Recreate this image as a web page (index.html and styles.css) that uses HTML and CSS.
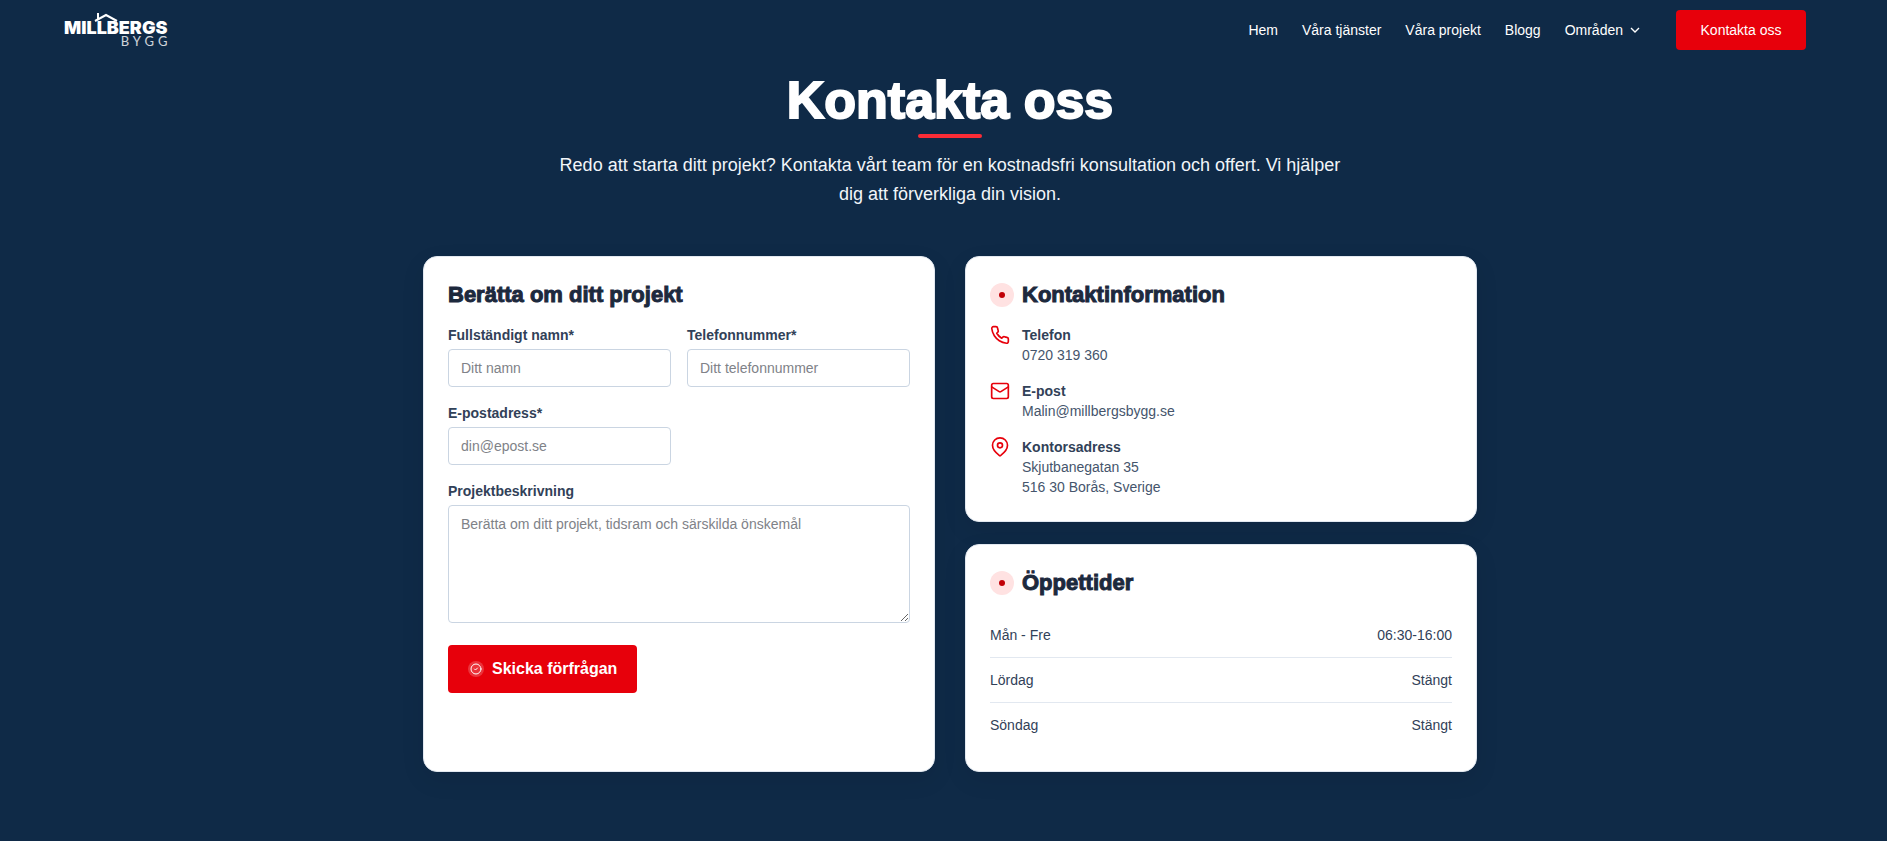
FILE: index.html
```html
<!DOCTYPE html>
<html lang="sv">
<head>
  <meta charset="UTF-8">
  <meta name="viewport" content="width=device-width, initial-scale=1">
  <title>Kontakta oss - Millbergs Bygg</title>
  <link rel="stylesheet" href="styles.css">
</head>
<body>
<header class="header">
  <a class="logo" href="#">
    <svg class="logo-roof" viewBox="0 0 24 10" width="24" height="10" fill="none" stroke="#fff" stroke-width="2">
      <path d="M1 8 L12 2 L23 8"/>
      <path d="M4 6 V0"/>
    </svg>
    <span class="logo-name">MILLBERGS</span>
    <span class="logo-sub">BYGG</span>
  </a>
  <nav class="nav">
    <a href="#">Hem</a>
    <a href="#">Våra tjänster</a>
    <a href="#">Våra projekt</a>
    <a href="#">Blogg</a>
    <a href="#" class="nav-drop">Områden
      <svg viewBox="0 0 24 24" width="16" height="16" fill="none" stroke="currentColor" stroke-width="2">
        <path d="m6 9 6 6 6-6"/>
      </svg>
    </a>
    <a href="#" class="nav-button">Kontakta oss</a>
  </nav>
</header>

<main class="main">
  <section class="intro">
    <h1>Kontakta oss</h1>
    <div class="line"></div>
    <p>Redo att starta ditt projekt? Kontakta vårt team för en kostnadsfri konsultation och offert. Vi hjälper dig att förverkliga din vision.</p>
  </section>

  <div class="columns">
    <section class="card">
      <h2>Berätta om ditt projekt</h2>
      <form class="form">
        <div class="field">
          <label for="name">Fullständigt namn*</label>
          <input type="text" id="name" placeholder="Ditt namn">
        </div>
        <div class="field">
          <label for="phone">Telefonnummer*</label>
          <input type="tel" id="phone" placeholder="Ditt telefonnummer">
        </div>
        <div class="field">
          <label for="email">E-postadress*</label>
          <input type="email" id="email" placeholder="din@epost.se">
        </div>
        <div class="field field-wide">
          <label for="message">Projektbeskrivning</label>
          <textarea id="message" placeholder="Berätta om ditt projekt, tidsram och särskilda önskemål"></textarea>
        </div>
        <button type="submit" class="submit">
          <span class="submit-icon">
            <svg viewBox="0 0 24 24" width="12" height="12" fill="none" stroke="currentColor" stroke-width="2" stroke-linecap="round" stroke-linejoin="round">
              <circle cx="12" cy="12" r="10"/>
              <path d="m9 12 2 2 4-4"/>
            </svg>
          </span>
          Skicka förfrågan
        </button>
      </form>
    </section>

    <div class="side">
      <section class="card">
        <h2><span class="dot"></span>Kontaktinformation</h2>
        <ul class="contacts">
          <li>
            <svg viewBox="0 0 24 24" width="20" height="20">
              <path d="M22 16.92v3a2 2 0 0 1-2.18 2 19.79 19.79 0 0 1-8.63-3.07 19.5 19.5 0 0 1-6-6 19.79 19.79 0 0 1-3.07-8.67A2 2 0 0 1 4.11 2h3a2 2 0 0 1 2 1.72 12.84 12.84 0 0 0 .7 2.81 2 2 0 0 1-.45 2.11L8.09 9.91a16 16 0 0 0 6 6l1.27-1.27a2 2 0 0 1 2.11-.45 12.84 12.84 0 0 0 2.81.7A2 2 0 0 1 22 16.92z"/>
            </svg>
            <div>
              <h3>Telefon</h3>
              <a href="tel:0720319360">0720 319 360</a>
            </div>
          </li>
          <li>
            <svg viewBox="0 0 24 24" width="20" height="20">
              <rect x="2" y="3" width="20" height="18" rx="2"/>
              <path d="m22 7-8.970 5.700a1.940 1.940 0 0 1-2.060 0L2 7"/>
            </svg>
            <div>
              <h3>E-post</h3>
              <a href="mailto:Malin@millbergsbygg.se">Malin@millbergsbygg.se</a>
            </div>
          </li>
          <li>
            <svg viewBox="0 0 24 24" width="20" height="20">
              <path d="M21 10c0 5-5.500 10.200-8.400 12.300a1 1 0 0 1-1.200 0C8.500 20.200 3 15 3 10a9 9 0 0 1 18 0"/>
              <circle cx="12" cy="10" r="3"/>
            </svg>
            <div>
              <h3>Kontorsadress</h3>
              <p>Skjutbanegatan 35<br>516 30 Borås, Sverige</p>
            </div>
          </li>
        </ul>
      </section>

      <section class="card">
        <h2><span class="dot"></span>Öppettider</h2>
        <table class="hours">
          <tr><th scope="row">Mån - Fre</th><td>06:30-16:00</td></tr>
          <tr><th scope="row">Lördag</th><td>Stängt</td></tr>
          <tr><th scope="row">Söndag</th><td>Stängt</td></tr>
        </table>
      </section>
    </div>
  </div>
</main>
</body>
</html>
```
FILE: styles.css
```css
* {
  box-sizing: border-box;
}

body {
  margin: 0;
  background: #0f2a47;
  font-family: "Liberation Sans", Arial, sans-serif;
  font-size: 14px;
  line-height: 20px;
  color: #314158;
}

h1, h2, h3, p, ul {
  margin: 0;
  padding: 0;
}

a {
  color: inherit;
  text-decoration: none;
}

.header {
  display: flex;
  align-items: center;
  justify-content: space-between;
  height: 60px;
  padding: 0 81px 0 64px;
  color: #fff;
}

.logo {
  position: relative;
  display: flex;
  flex-direction: column;
  align-items: flex-end;
  padding-top: 8px;
}

.logo-name {
  font-family: Inter, sans-serif;
  font-size: 18px;
  font-weight: 900;
  line-height: 14px;
}

.logo-sub {
  font-family: Lato, sans-serif;
  font-size: 13px;
  font-weight: 400;
  line-height: 12px;
  letter-spacing: 4px;
  margin-right: -4px;
  opacity: 0.8;
}

.logo-roof {
  position: absolute;
  top: 0;
  left: 30px;
}

.nav {
  display: flex;
  align-items: center;
  gap: 24px;
}

.nav-drop {
  display: flex;
  align-items: center;
  gap: 4px;
}

.nav-button {
  min-width: 130px;
  margin-left: 9px;
  padding: 10px 24px;
  text-align: center;
  background: #e7000b;
  border-radius: 4px;
}

.main {
  padding: 13px 16px 69px 29px;
}

.intro {
  display: flex;
  flex-direction: column;
  align-items: center;
  text-align: center;
  color: #fff;
}

.intro h1 {
  font-size: 52px;
  font-weight: 800;
  line-height: 54px;
  -webkit-text-stroke: 2px currentColor;
}

.line {
  width: 64px;
  height: 4px;
  margin: 7px 0 13px;
  border-radius: 2px;
  background: #fb2c36;
}

.intro p {
  max-width: 800px;
  font-size: 18px;
  line-height: 29px;
  color: #f1f5f9;
}

.columns {
  display: grid;
  grid-template-columns: 1fr 1fr;
  gap: 30px;
  max-width: 1054px;
  margin: 47px auto 0;
}

.side {
  display: flex;
  flex-direction: column;
  gap: 22px;
}

.card {
  padding: 24px;
  background: #fff;
  border: 1px solid #e2e8f0;
  border-radius: 14px;
  box-shadow: 0 8px 24px rgba(0, 0, 0, 0.08);
}

.card h2 {
  display: flex;
  align-items: center;
  gap: 8px;
  margin-bottom: 16px;
  font-size: 22px;
  font-weight: 800;
  line-height: 28px;
  color: #1d293d;
  -webkit-text-stroke: 1px currentColor;
}

.dot {
  display: flex;
  align-items: center;
  justify-content: center;
  width: 24px;
  height: 24px;
  border-radius: 50%;
  background: #ffe2e2;
}

.dot::before {
  content: "";
  width: 6px;
  height: 6px;
  border-radius: 50%;
  background: #c10007;
}

.form {
  display: grid;
  grid-template-columns: 1fr 1fr;
  gap: 16px;
}

.field {
  display: flex;
  flex-direction: column;
  gap: 4px;
}

.field-wide {
  grid-column: 1 / 3;
}

.field label {
  font-weight: 600;
}

.field input,
.field textarea {
  width: 100%;
  padding: 8px 12px;
  font: inherit;
  color: #314158;
  background: #fff;
  border: 1px solid #cad5e2;
  border-radius: 4px;
}

.field input {
  height: 38px;
}

.field textarea {
  height: 118px;
  resize: vertical;
}

.field ::placeholder {
  color: #808288;
}

.submit {
  display: flex;
  align-items: center;
  justify-self: start;
  gap: 8px;
  height: 48px;
  margin-top: 6px;
  padding: 0 20px;
  font-family: inherit;
  font-size: 16px;
  font-weight: 600;
  color: #fff;
  background: #e7000b;
  border: 0;
  border-radius: 4px;
}

.submit-icon {
  display: flex;
  align-items: center;
  justify-content: center;
  width: 16px;
  height: 16px;
  border-radius: 50%;
  background: rgba(255, 255, 255, 0.2);
}

.contacts {
  display: flex;
  flex-direction: column;
  gap: 16px;
  list-style: none;
  color: #45556c;
}

.contacts li {
  display: flex;
  gap: 12px;
}

.contacts svg {
  fill: none;
  stroke: #e7000b;
  stroke-width: 2;
  stroke-linecap: round;
  stroke-linejoin: round;
}

.contacts h3 {
  font-size: 14px;
  font-weight: 600;
  color: #314158;
}

.hours {
  width: 100%;
  border-collapse: separate;
  border-spacing: 0;
}

.hours th,
.hours td {
  padding: 12px 0;
  font-weight: 400;
  text-align: left;
  border-bottom: 1px solid #e2e8f0;
}

.hours td {
  text-align: right;
}

.hours tr:last-child th,
.hours tr:last-child td {
  border-bottom: 0;
}
```
